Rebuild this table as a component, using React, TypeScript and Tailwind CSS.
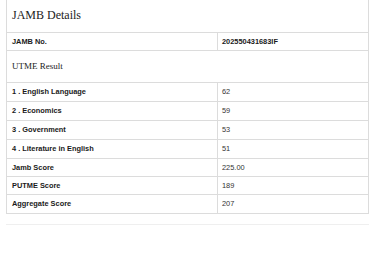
import React from "react";

const rows: { label: string; value: string; h: string }[] = [
  { label: "1 . English Language", value: "62", h: "h-[19px]" },
  { label: "2 . Economics", value: "59", h: "h-[19px]" },
  { label: "3 . Government", value: "53", h: "h-[19px]" },
  { label: "4 . Literature in English", value: "51", h: "h-[19px]" },
  { label: "Jamb Score", value: "225.00", h: "h-[18px]" },
  { label: "PUTME Score", value: "189", h: "h-[18px]" },
  { label: "Aggregate Score", value: "207", h: "h-[19px]" },
];

function Row({ label, value, h, boldValue }: { label: string; value: string; h: string; boldValue?: boolean }) {
  return (
    <div className={`flex ${h} border-b border-[#dcdcdc]`}>
      <div className="w-[211px] border-r border-[#dcdcdc] flex items-center pl-[5px] text-[7.4px] font-bold text-[#1a1a1a]">
        {label}
      </div>
      <div className={`flex-1 flex items-center pl-[4px] text-[7.4px] ${boldValue ? "font-bold text-[#1a1a1a]" : "text-[#333]"}`}>
        {value}
      </div>
    </div>
  );
}

export default function App() {
  return (
    <div className="w-[385px] h-[264px] bg-white" style={{ fontFamily: '"Liberation Sans", Arial, sans-serif' }}>
      <div className="ml-[6px] w-[363px]">
        <div className="border-l border-r border-[#dcdcdc]">
          <div className="h-[33px] border-b border-[#dcdcdc] flex items-center pl-[5px] pb-[3px]">
            <span className="text-[12px] text-[#222]" style={{ fontFamily: '"Liberation Serif", "Times New Roman", serif' }}>
              JAMB Details
            </span>
          </div>
          <Row label="JAMB No." value="202550431683IF" h="h-[18px]" boldValue />
          <div className="h-[32px] border-b border-[#dcdcdc] flex items-center pl-[5px]">
            <span className="text-[9px] text-[#222]" style={{ fontFamily: '"Liberation Serif", "Times New Roman", serif' }}>
              UTME Result
            </span>
          </div>
          {rows.map((r) => (
            <Row key={r.label} {...r} />
          ))}
        </div>
        <div className="mt-[10px] h-px bg-[#efefef]" />
      </div>
    </div>
  );
}
